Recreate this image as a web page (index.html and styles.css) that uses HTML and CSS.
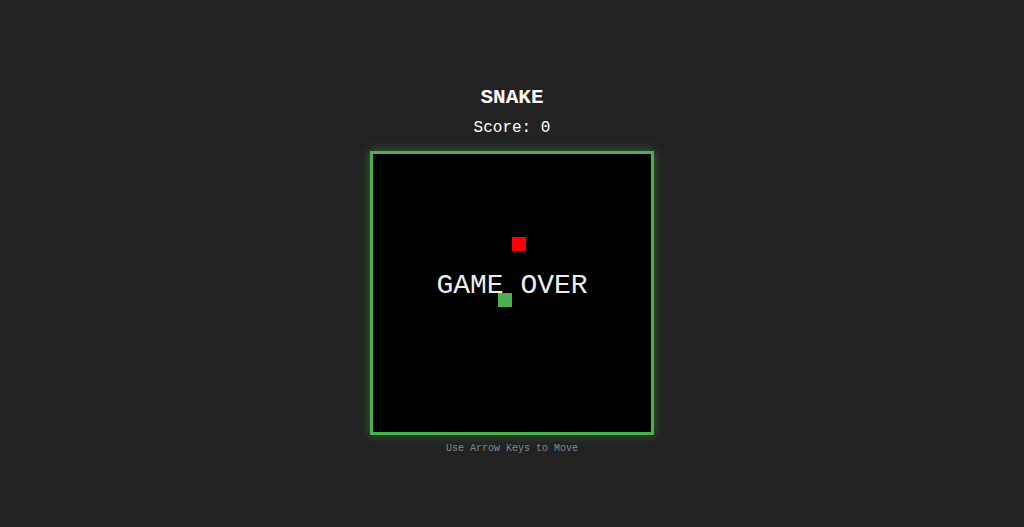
FILE: index.html
```html
<!DOCTYPE html>
<html>
<head>
<meta charset="utf-8">
<title>Snake</title>
<link rel="stylesheet" href="styles.css">
</head>
<body>
	<div class="game">
		<h1 class="title">SNAKE</h1>
		<p class="score">Score: <span id="score">0</span></p>
		<div class="board" id="board">
			<div class="over">GAME OVER</div>
			<span class="cell food" style="left:139px; top:83px;"></span>
			<span class="cell snake" style="left:125px; top:139px;"></span>
		</div>
		<p class="hint">Use Arrow Keys to Move</p>
	</div>
</body>
</html>
```

FILE: styles.css
```css
*{margin:0; padding:0;}
html,body{height:100%;}
body{background:#222; color:#fff; font-family:"Courier New","Nimbus Mono PS","FreeMono","Liberation Mono",monospace;}
.game{display:flex; flex-direction:column; align-items:center; padding-top:86px;}
/*标题*/
.title{font-size:21px; line-height:24px; font-weight:bold;}
.score{font-size:16px; line-height:20px; margin-top:8px;}
/*棋盘*/
.board{width:278px; height:278px; margin-top:13px; background:#000; border:3px solid #4caf50; box-shadow:0 0 10px rgba(76,175,80,0.5); position:relative;}
.over{position:absolute; left:0; top:118px; width:100%; text-align:center; font-size:28px; line-height:28px; color:#eee;}
.cell{position:absolute; width:14px; height:14px; display:block;}
.food{background:#f00;}
.snake{background:#4caf50;}
.hint{font-size:10px; line-height:12px; margin-top:8px; color:#888;}
```
